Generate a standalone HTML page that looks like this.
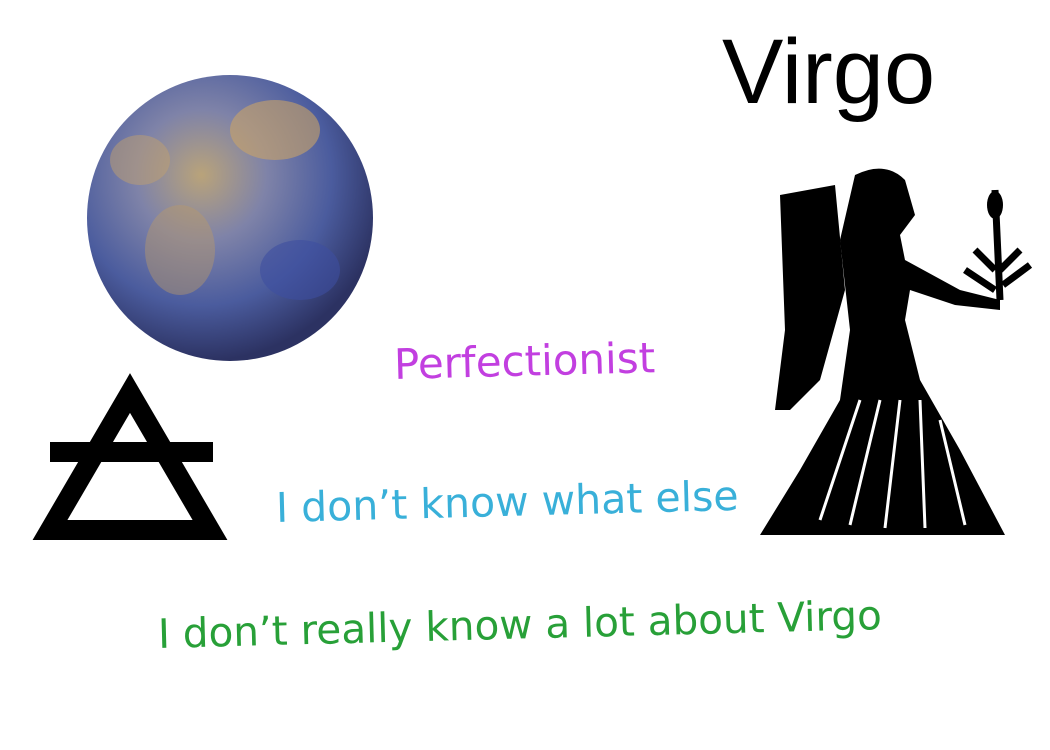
<!DOCTYPE html>
<html><head><meta charset="utf-8"><style>
body{margin:0;width:1050px;height:750px;background:#fff;overflow:hidden;position:relative;font-family:"Liberation Sans",sans-serif}
.t{position:absolute;white-space:nowrap;font-family:"DejaVu Sans","Liberation Sans",sans-serif}
</style></head><body>
<div class="t" style="left:722px;top:20px;font-size:92px;font-family:'Liberation Sans',sans-serif;color:#000">Virgo</div>
<div class="t" style="left:394px;top:340px;font-size:42px;color:#c23fe0;transform:rotate(-1.5deg);transform-origin:left center">Perfectionist</div>
<div class="t" style="left:276px;top:484px;font-size:41px;color:#39b0d9;transform:rotate(-1.5deg);transform-origin:left center">I don’t know what else</div>
<div class="t" style="left:158px;top:610px;font-size:40.5px;color:#28a038;transform:rotate(-1.5deg);transform-origin:left center">I don’t really know a lot about Virgo</div>
<svg width="1050" height="750" style="position:absolute;left:0;top:0">
<defs>
<radialGradient id="m" cx="40%" cy="35%" r="65%">
<stop offset="0" stop-color="#b9a37a"/>
<stop offset="0.35" stop-color="#7f83a8"/>
<stop offset="0.7" stop-color="#4b5c9e"/>
<stop offset="1" stop-color="#2c3262"/>
</radialGradient>
</defs>
<circle cx="230" cy="218" r="143" fill="url(#m)"/>
<ellipse cx="275" cy="130" rx="45" ry="30" fill="#c9a468" opacity=".6"/>
<ellipse cx="180" cy="250" rx="35" ry="45" fill="#b89a6a" opacity=".45"/>
<ellipse cx="300" cy="270" rx="40" ry="30" fill="#3d4fa0" opacity=".6"/>
<ellipse cx="140" cy="160" rx="30" ry="25" fill="#c0a070" opacity=".5"/>
<polygon points="130,393 50,530 210,530" fill="none" stroke="#000" stroke-width="20"/>
<rect x="50" y="442" width="163" height="20" fill="#000"/>
<g fill="#000">
<path d="M780 195 L835 185 L845 290 L820 380 L790 410 L775 410 L785 330 Z"/>
<path d="M855 175 Q885 160 905 180 L915 215 L900 235 L905 260 L960 290 L1000 300 L1000 310 L955 305 L910 290 L905 320 L920 380 L960 450 L1005 535 L760 535 L800 470 L840 400 L850 330 L840 240 Z"/>
<path d="M995 190 L1000 300 M975 250 L995 270 M1020 250 L1000 270 M965 270 L995 290 M1030 265 L1003 285" stroke="#000" stroke-width="7" fill="none"/>
<ellipse cx="995" cy="205" rx="8" ry="14"/>
</g>
<g stroke="#fff" stroke-width="3" fill="none">
<path d="M860 400 L820 520 M880 400 L850 525 M900 400 L885 528 M920 400 L925 528 M940 420 L965 525"/>
</g>
</svg>
</body></html>
